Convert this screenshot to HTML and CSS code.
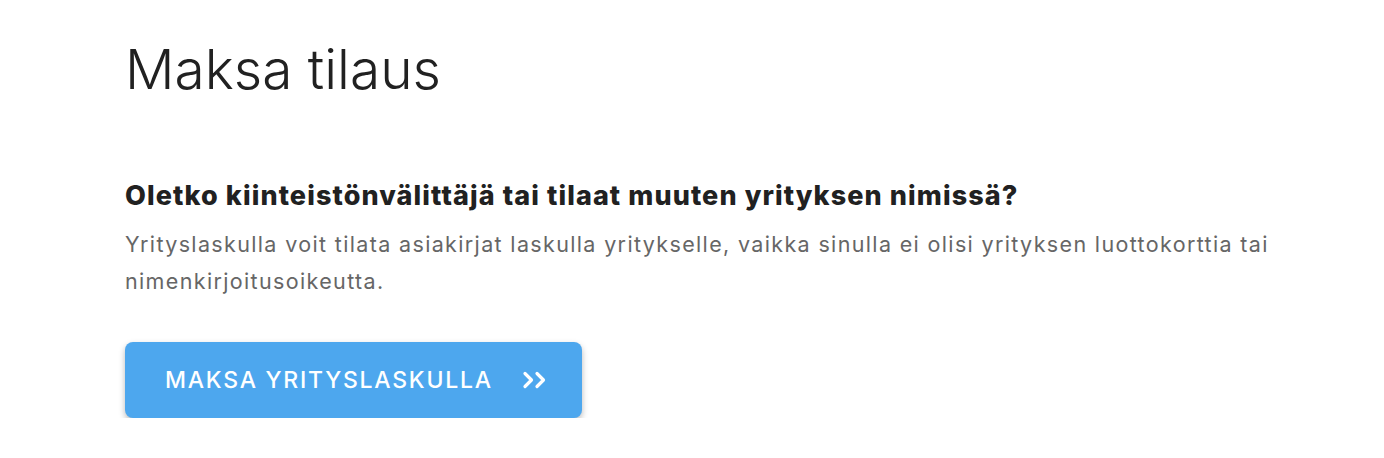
FILE: index.html
```html
<!DOCTYPE html>
<html lang="fi">
<head>
<meta charset="utf-8">
<title>Maksa tilaus</title>
<link rel="stylesheet" href="styles.css">
</head>
<body>
<main class="page">
  <h1 class="title">Maksa tilaus</h1>
  <section class="company">
    <h2 class="company-title">Oletko kiinteistönvälittäjä tai tilaat muuten yrityksen nimissä?</h2>
    <p class="company-text">Yrityslaskulla voit tilata asiakirjat laskulla yritykselle, vaikka sinulla ei olisi yrityksen luottokorttia tai nimenkirjoitusoikeutta.</p>
    <button class="pay-btn" type="button">
      <span class="pay-label">MAKSA YRITYSLASKULLA</span>
      <svg class="pay-icon" width="28" height="18" viewBox="0 0 28 18" aria-hidden="true">
        <path d="M3 2.5l6.5 6.5-6.5 6.5M15 2.5l6.5 6.5-6.5 6.5" fill="none" stroke="#fff" stroke-width="3.2" stroke-linecap="round" stroke-linejoin="round"/>
      </svg>
    </button>
  </section>
</main>
</body>
</html>
```
FILE: styles.css
```css
html, body {
  margin: 0;
  padding: 0;
  background: #fff;
}
body {
  font-family: "Inter", "Noto Sans", sans-serif;
  color: #212121;
}
.page {
  padding: 37px 100px 0 125px;
}
.title {
  margin: 0;
  font-size: 55px;
  font-weight: 300;
  line-height: 64px;
  letter-spacing: 0;
  color: #212121;
}
.company {
  margin-top: 78px;
}
.company-title {
  margin: 0;
  font-size: 27px;
  font-weight: 800;
  line-height: 34px;
  letter-spacing: 1.1px;
  color: #212121;
}
.company-text {
  margin: 13px 0 0;
  max-width: 1180px;
  font-size: 21.5px;
  font-weight: 400;
  line-height: 37px;
  letter-spacing: 1.35px;
  color: #666;
}
.pay-btn {
  margin-top: 42px;
  display: flex;
  align-items: center;
  gap: 29px;
  height: 76px;
  padding: 0 32px 0 40px;
  border: 0;
  border-radius: 8px;
  background: #4da7ee;
  box-shadow: 0 3px 6px rgba(0, 0, 0, 0.28);
  color: #fff;
  font-family: "Inter", "Noto Sans", sans-serif;
  font-size: 23px;
  font-weight: 500;
  letter-spacing: 1.75px;
  cursor: pointer;
}
.pay-icon {
  display: block;
}
```
